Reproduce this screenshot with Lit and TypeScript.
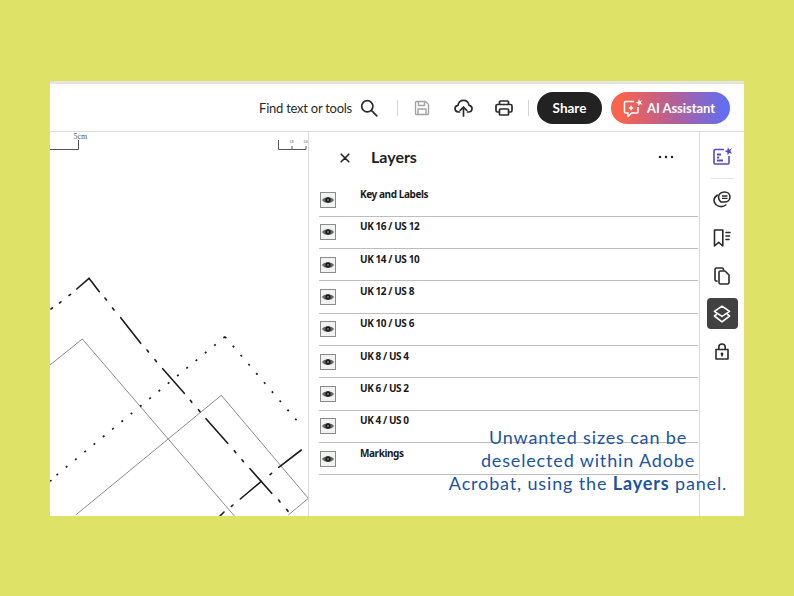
import { LitElement, html, css, svg } from "lit";
import { customElement } from "lit/decorators.js";

const LAYERS = ["Key and Labels","UK 16 / US 12","UK 14 / US 10","UK 12 / US 8","UK 10 / US 6","UK 8 / US 4","UK 6 / US 2","UK 4 / US 0","Markings"];

const DASH_MAIN: number[][] = [
  [76.7,289,89,278.3],[89,278.3,99.3,291.7],[69,295.5,70.5,294.4],[59.5,303,61,301.9],[51,309,52.5,307.9],
  [105,298,106.5,300],[112.5,308,114,310],[120.7,317.7,140.7,343.3],[147,350,148.5,352],[155,359.7,156.5,361.7],
  [162.7,368.7,184.3,393.3],[190.3,400.3,191.8,402.3],[198.5,409.7,200,411.7],[206,418.7,227.7,443.3],
  [234.3,450.7,235.8,452.7],[242,459.7,243.5,461.7],[250,468.7,271.7,493.3],[278.6,500,280,502],[286.6,509.3,288,511.3],
  [301.3,450,278.7,467.3],[271.6,473.3,270,474.6],[261.3,481.3,240.3,499],[233,505,231.4,506.4],[224,512,220,516],[50,481,51,480.6],
];

const canvasArt = () => svg`
  <svg class="art" viewBox="50 132 258 384" width="258" height="384">
    <g fill="none" stroke="#8c8c8c" stroke-width="1">
      <path d="M50 365 L82.3 339 L235 516.7"/>
      <path d="M75.7 515 L221.3 395.3 L308.3 498.3 L288.3 515"/>
      <path d="M50 149.5 H78.5 V140 M278.5 140 V149.5 H306 V146 M292 149.5 V146" stroke="#555"/>
    </g>
    <g stroke="#1c1c1c" stroke-width="1.6" stroke-linecap="round">
      ${DASH_MAIN.map(([a, b, c, d]) => svg`<line x1=${a} y1=${b} x2=${c} y2=${d}></line>`)}
    </g>
    <g fill="none" stroke="#1c1c1c" stroke-width="1.7" stroke-dasharray="2 10">
      <path d="M225 336.7 L56 475.5"/>
      <path d="M225 336.7 L302.5 427.2"/>
    </g>
    <text x="73.5" y="139" font-family="Liberation Serif, serif" font-size="8" fill="#555">5cm</text>
    <text x="289.5" y="143" font-family="Liberation Sans, sans-serif" font-size="3" fill="#555">1/8</text>
    <text x="303.5" y="143" font-family="Liberation Sans, sans-serif" font-size="3" fill="#555">1/4</text>
  </svg>`;

const eye = () => svg`
  <svg class="eye" viewBox="0 0 16 16" width="16" height="16">
    <rect x=".5" y=".5" width="15" height="15" fill="#f2f2f2" stroke="#8b8b8b"/>
    <path d="M2 8 C4.2 4.2 11.8 4.2 14 8 C11.8 11.8 4.2 11.8 2 8Z" fill="#5f6a60"/>
    <circle cx="8" cy="8" r="2.7" fill="#1b1b1b"/>
    <circle cx="8" cy="8" r="1" fill="#7d7d7d"/>
  </svg>`;

const ICONS = {
  search: svg`<svg viewBox="0 0 18 18" width="18" height="18" fill="none" stroke="#2b2b2b" stroke-width="1.7" stroke-linecap="round"><circle cx="7.3" cy="7.3" r="5.6"/><path d="M11.6 11.6 L16.8 16.8"/></svg>`,
  save: svg`<svg viewBox="0 0 16 16" width="16" height="16" fill="none" stroke="#a3a3a3" stroke-width="1.4" stroke-linejoin="round"><path d="M1.5 2.5 a1 1 0 0 1 1-1 H11.5 L14.5 4.5 V13.5 a1 1 0 0 1-1 1 H2.5 a1 1 0 0 1-1-1Z"/><path d="M4.5 1.5 V5.5 H10.5 V1.5 M4 14.5 V9 H12 V14.5"/></svg>`,
  upload: svg`<svg viewBox="0 0 19 18" width="19" height="18" fill="none" stroke="#2b2b2b" stroke-width="1.7" stroke-linecap="round" stroke-linejoin="round"><path d="M5.5 13 H4.6 C2.4 13 1 11.4 1 9.6 C1 7.8 2.3 6.5 4 6.3 C4.5 3.4 6.8 1.4 9.5 1.4 C12.2 1.4 14.5 3.4 15 6.3 C16.7 6.5 18 7.8 18 9.6 C18 11.4 16.6 13 14.4 13 H13.5"/><path d="M9.5 17 V8.4 M6.2 11.4 L9.5 8 L12.8 11.4"/></svg>`,
  print: svg`<svg viewBox="0 0 18 16" width="18" height="16" fill="none" stroke="#2b2b2b" stroke-width="1.7" stroke-linejoin="round"><path d="M4.5 4.5 V2 a1 1 0 0 1 1-1 H12.5 a1 1 0 0 1 1 1 V4.5"/><path d="M4 12 H2.5 a1.5 1.5 0 0 1-1.5-1.5 V6 a1.5 1.5 0 0 1 1.5-1.5 H15.5 a1.5 1.5 0 0 1 1.5 1.5 V10.5 a1.5 1.5 0 0 1-1.5 1.5 H14"/><rect x="4.5" y="9" width="9" height="6" rx=".8"/></svg>`,
  ai: svg`<svg viewBox="0 0 20 20" width="20" height="20" fill="none" stroke="#fff" stroke-width="1.5" stroke-linejoin="round"><path d="M11 3.5 H2.5 a1 1 0 0 0-1 1 V14 a1 1 0 0 0 1 1 H5 V18.5 L8.5 15 H14 a1 1 0 0 0 1-1 V9"/><path d="M8 7.2 L9 9 L10.8 10 L9 11 L8 12.8 L7 11 L5.2 10 L7 9Z" fill="#fff" stroke="none"/><path d="M16 .8 L16.8 3.6 L19.4 1.9 L17.6 4.6 L19.6 6.8 L16.9 6.1 L15.4 8.2 L15.2 5.6 L12.4 4.4 L15.2 3.8Z" fill="#fff" stroke="none"/></svg>`,
  close: svg`<svg viewBox="0 0 10 10" width="10" height="10" stroke="#222" stroke-width="1.6" stroke-linecap="round"><path d="M1.2 1.2 L8.8 8.8 M8.8 1.2 L1.2 8.8"/></svg>`,
  more: svg`<svg viewBox="0 0 16 4" width="16" height="4" fill="#222"><circle cx="2" cy="2" r="1.25"/><circle cx="8" cy="2" r="1.25"/><circle cx="14" cy="2" r="1.25"/></svg>`,
  edit: svg`<svg viewBox="0 0 19 18" width="19" height="18" fill="none" stroke="#5b48c9" stroke-width="1.6" stroke-linejoin="round"><path d="M11 2.5 H2 a1 1 0 0 0-1 1 V16 a1 1 0 0 0 1 1 H15 a1 1 0 0 0 1-1 V9"/><path d="M4 7.5 H8 M4 10.5 H6.2 M4 13.5 H10" stroke-width="1.8"/><path d="M15 0 L16.2 2.8 L19 1 L17.4 4 L19 6.6 L16.2 6 L14.6 8.2 L14.3 5.4 L11.6 4 L14.3 3.2Z" fill="#5b48c9" stroke="none"/></svg>`,
  comment: svg`<svg viewBox="0 0 18 17" width="18" height="17" fill="none" stroke="#2b2b2b" stroke-width="1.6" stroke-linecap="round"><path d="M11.5 1 C14.6 1 17 3.2 17 6 C17 8.9 14.6 11 11.5 11 H7.8 C6.3 9.8 5.5 8 5.5 6 C5.5 3.2 8.2 1 11.5 1Z"/><path d="M9.5 5 H14 M9.5 7.4 H14" stroke-width="1.3"/><path d="M4.2 4.2 C2.2 5.4 1 7.2 1 9.2 C1 12.8 4.2 15.6 8.2 15.6 C10 15.6 11.6 15 12.8 14"/></svg>`,
  bookmark: svg`<svg viewBox="0 0 18 18" width="18" height="18" fill="none" stroke="#2b2b2b" stroke-width="1.6" stroke-linejoin="round"><path d="M1.5 1 H9.8 V17 L5.7 13.4 L1.5 17Z"/><path d="M13 3.5 H17 M13 7 H16.5 M13 10.5 H16" stroke-linecap="round"/></svg>`,
  pages: svg`<svg viewBox="0 0 16 18" width="16" height="18" fill="none" stroke="#2b2b2b" stroke-width="1.6" stroke-linejoin="round"><path d="M3.6 14 H2.5 A1.5 1.5 0 0 1 1 12.5 V2.5 A1.5 1.5 0 0 1 2.5 1 H8 A1.5 1.5 0 0 1 9.5 2.5 V3.2"/><path d="M5 5.5 A1.5 1.5 0 0 1 6.5 4 H11 L15 8 V15.5 A1.5 1.5 0 0 1 13.5 17 H6.5 A1.5 1.5 0 0 1 5 15.5Z"/></svg>`,
  layers: svg`<svg viewBox="0 0 18 18" width="18" height="18" fill="none" stroke="#fff" stroke-width="1.6" stroke-linejoin="round"><path d="M9 1.2 L16.6 6.4 L9 11.4 L1.4 6.4Z"/><path d="M4 9 L1.4 11 L9 16.8 L16.6 11 L14 9"/></svg>`,
  lock: svg`<svg viewBox="0 0 14 17" width="14" height="17" fill="none" stroke="#2b2b2b" stroke-width="1.6" stroke-linejoin="round"><path d="M1 6.5 H13 V16 H1Z"/><path d="M3.8 6.5 V4.2 A3.2 3.2 0 0 1 10.2 4.2 V6.5"/><circle cx="7" cy="11" r="1.4" fill="#2b2b2b" stroke="none"/><path d="M7 11 V13.4"/></svg>`,
};

@customElement("app-root")
export class AppRoot extends LitElement {
  static styles = css`
    :host { display: block; width: 794px; height: 596px; background: #dee266; padding: 81px 50px 80px; box-sizing: border-box; position: relative; overflow: hidden; font-family: "Lato", "Noto Sans", sans-serif; color: #222; }
    .window { height: 435px; background: #fff; border-top: 3px solid #e4e4e2; box-sizing: border-box; display: flex; flex-direction: column; }
    .toolbar { height: 48px; flex: none; box-sizing: border-box; border-bottom: 1px solid #dcdcdc; display: flex; align-items: center; justify-content: flex-end; padding: 0 14px 0 0; }
    .find { font-size: 13px; letter-spacing: -.25px; color: #2b2b2b; margin-right: 8px; }
    .tool { display: flex; }
    .search { margin-right: 19px; }
    .divider { width: 1px; height: 16px; background: #d5d5d5; }
    .save { margin: 0 24px 0 16px; }
    .upload { margin-right: 22px; }
    .print { margin-right: 15px; }
    .pill { height: 32px; border-radius: 16px; display: flex; align-items: center; color: #fff; font-weight: 700; box-sizing: border-box; }
    .share { width: 65px; justify-content: center; font-size: 13.5px; background: #222; margin: 0 9px 0 8px; }
    .assistant { width: 119px; padding-left: 12px; gap: 4px; font-size: 13px; letter-spacing: -.05px; background: linear-gradient(90deg, #f9644e 8%, #b85f92 50%, #5b6ffb 100%); }
    .body { flex: 1; display: flex; min-height: 0; }
    .canvas { width: 258px; flex: none; border-right: 1px solid #dcdcdc; overflow: hidden; }
    .art { display: block; }
    .panel { flex: 1; min-width: 0; padding: 0 1px 0 10px; }
    .head { height: 52.5px; box-sizing: border-box; padding-bottom: 2px; display: flex; align-items: center; }
    .close { display: flex; margin: 2px 21px 0; }
    .title { font-size: 16px; font-weight: 700; flex: 1; margin-top: -1px; }
    .more { display: flex; margin-right: 24px; }
    .row { height: 32.33px; box-sizing: border-box; border-bottom: 1px solid #bdbdbd; display: flex; align-items: flex-start; }
    .eye { display: block; margin: 7.5px 24px 0 1px; flex: none; }
    .label { font-family: "Noto Sans", sans-serif; font-size: 10px; letter-spacing: -.42px; font-weight: 700; color: #1a1a1a; line-height: 12px; margin-top: 3.5px; }
    .rail { width: 45px; flex: none; border-left: 1px solid #dcdcdc; box-sizing: border-box; display: flex; flex-direction: column; align-items: center; }
    .rail-btn { width: 31px; height: 31px; display: flex; align-items: center; justify-content: center; border-radius: 4px; }
    .rail-btn + .rail-btn { margin-top: 7px; }
    .first { margin-top: 8px; }
    .sep { width: 23px; height: 1px; background: #e4e4e4; margin: 7px 0 5px; }
    .active { background: #414141; }
    .caption { position: absolute; left: 388px; width: 400px; top: 426px; text-align: center; font-size: 18px; line-height: 23px; letter-spacing: .85px; color: #1c53a3; }
  `;

  render() {
    return html`
      <div class="window">
        <div class="toolbar">
          <span class="find">Find text or tools</span>
          <span class="tool search">${ICONS.search}</span>
          <span class="divider"></span>
          <span class="tool save">${ICONS.save}</span>
          <span class="tool upload">${ICONS.upload}</span>
          <span class="tool print">${ICONS.print}</span>
          <span class="divider"></span>
          <span class="pill share">Share</span>
          <span class="pill assistant">${ICONS.ai}AI Assistant</span>
        </div>
        <div class="body">
          <div class="canvas">${canvasArt()}</div>
          <div class="panel">
            <div class="head">
              <span class="close">${ICONS.close}</span>
              <span class="title">Layers</span>
              <span class="more">${ICONS.more}</span>
            </div>
            ${LAYERS.map((name) => html`<div class="row">${eye()}<span class="label">${name}</span></div>`)}
          </div>
          <div class="rail">
            <span class="rail-btn first">${ICONS.edit}</span>
            <span class="sep"></span>
            <span class="rail-btn">${ICONS.comment}</span>
            <span class="rail-btn">${ICONS.bookmark}</span>
            <span class="rail-btn">${ICONS.pages}</span>
            <span class="rail-btn active">${ICONS.layers}</span>
            <span class="rail-btn">${ICONS.lock}</span>
          </div>
        </div>
      </div>
      <div class="caption">Unwanted sizes can be<br />deselected within Adobe<br />Acrobat, using the <b>Layers</b> panel.</div>
    `;
  }
}
